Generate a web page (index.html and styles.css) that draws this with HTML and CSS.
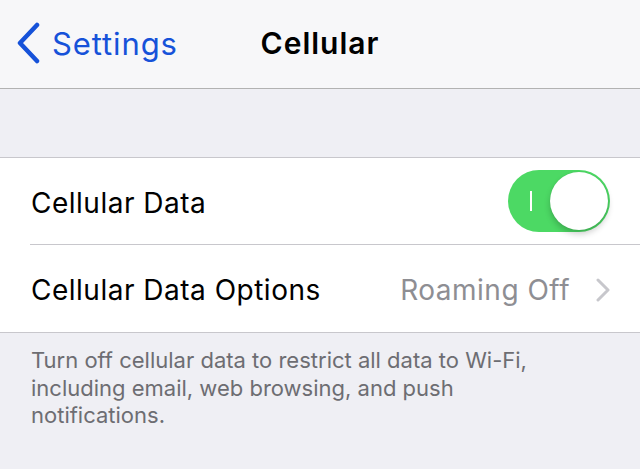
FILE: index.html
```html
<!DOCTYPE html>
<html lang="en">
<head>
    <meta charset="UTF-8">
    <meta name="viewport" content="width=device-width, initial-scale=1.0">
    <title>Cellular</title>
    <link rel="stylesheet" href="styles.css">
</head>
<body>
    <div class="nav-bar">
        <div class="nav-back">
            <svg class="back-chevron" width="26" height="42" viewBox="0 0 26 42">
                <path d="M22 3 L5 21 L22 39" fill="none" stroke="#1652d9" stroke-width="4.5" stroke-linecap="round" stroke-linejoin="round"/>
            </svg>
            <span class="back-label">Settings</span>
        </div>
        <div class="nav-title">Cellular</div>
        <div></div>
    </div>

    <div class="group-gap"></div>

    <div class="table-group">
        <div class="cell">
            <span class="cell-label">Cellular Data</span>
            <div class="toggle on">
                <span class="toggle-mark"></span>
                <span class="toggle-knob"></span>
            </div>
        </div>
        <div class="cell">
            <span class="cell-label">Cellular Data Options</span>
            <span class="cell-value">Roaming Off</span>
            <svg class="disclosure" width="14" height="24" viewBox="0 0 14 24">
                <path d="M2 2 L12 12 L2 22" fill="none" stroke="#c7c7cc" stroke-width="3" stroke-linecap="round" stroke-linejoin="round"/>
            </svg>
        </div>
    </div>

    <p class="group-footer">
        Turn off cellular data to restrict all data to Wi-Fi, including email, web browsing, and push notifications.
    </p>
</body>
</html>
```

FILE: styles.css
```css
* {
    margin: 0;
    padding: 0;
    box-sizing: border-box;
}

body {
    font-family: Inter, Roboto, "Liberation Sans", sans-serif;
    background: #efeff4;
    height: 100vh;
    overflow: hidden;
}

.nav-bar {
    height: 89px;
    background: #f7f7f9;
    border-bottom: 1px solid #b2b2b2;
    display: grid;
    grid-template-columns: 1fr auto 1fr;
    align-items: center;
    padding-bottom: 2px;
}

.nav-back {
    display: flex;
    align-items: center;
    padding-left: 15px;
    color: #1652d9;
}

.back-chevron {
    margin-right: 11px;
}

.back-label {
    font-size: 31px;
    letter-spacing: 0.9px;
}

.nav-title {
    font-size: 30px;
    font-weight: 600;
    letter-spacing: 1px;
    color: #000;
}

.group-gap {
    height: 69px;
    border-bottom: 1px solid #c8c7cc;
}

.table-group {
    background: white;
    border-bottom: 1px solid #c8c7cc;
}

.cell {
    height: 87px;
    display: flex;
    align-items: center;
    padding: 3px 30px 0 31px;
    font-size: 28px;
    letter-spacing: 0.5px;
    color: #000;
}

.cell:first-child {
    border-bottom: 1px solid #c8c7cc;
    margin-left: 30px;
    padding-left: 1px;
}

.cell-label {
    flex: 1;
}

.cell-value {
    color: #8e8e93;
    margin-right: 26px;
}

.toggle {
    width: 102px;
    height: 62px;
    border-radius: 31px;
    background: #4cd964;
    display: flex;
    align-items: center;
    justify-content: space-between;
    padding: 0 2px 0 22px;
    margin-top: -3px;
}

.toggle-mark {
    width: 2px;
    height: 20px;
    background: white;
}

.toggle-knob {
    width: 58px;
    height: 58px;
    border-radius: 50%;
    background: white;
    box-shadow: 0 4px 6px rgba(0, 0, 0, 0.2), 0 0 1px rgba(0, 0, 0, 0.15);
}

.group-footer {
    padding: 14px 90px 0 31px;
    font-size: 22px;
    line-height: 27.5px;
    color: #6d6d72;
}
```
